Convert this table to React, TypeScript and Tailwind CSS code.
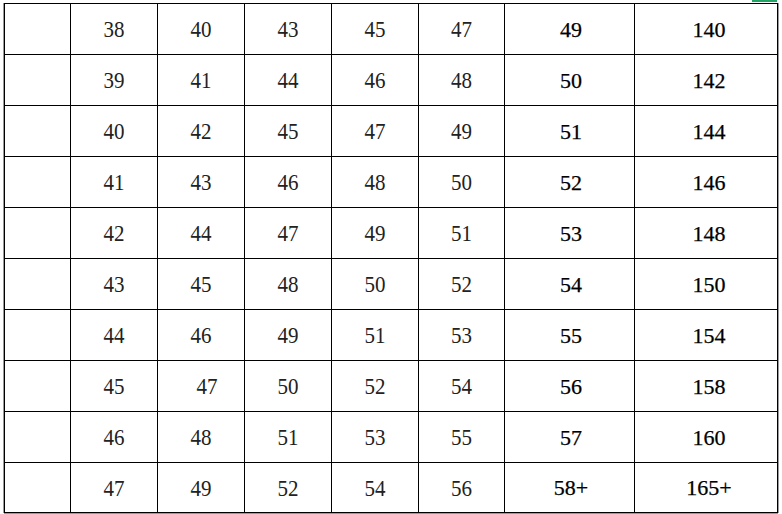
const rows: (string | number)[][] = [
  [38, 40, 43, 45, 47, 49, 140],
  [39, 41, 44, 46, 48, 50, 142],
  [40, 42, 45, 47, 49, 51, 144],
  [41, 43, 46, 48, 50, 52, 146],
  [42, 44, 47, 49, 51, 53, 148],
  [43, 45, 48, 50, 52, 54, 150],
  [44, 46, 49, 51, 53, 55, 154],
  [45, 47, 50, 52, 54, 56, 158],
  [46, 48, 51, 53, 55, 57, 160],
  [47, 49, 52, 54, 56, "58+", "165+"],
]

export default function App() {
  return (
    <div className="relative w-[782px] h-[514px] bg-white overflow-hidden">
      <div className="absolute top-0 left-[752px] w-[25px] h-[2px] bg-[#21a366]" />
      <div className="pl-[4px] pt-[3px]">
        <div className="grid grid-cols-[65px_86px_86px_86px_86px_85px_129px_142px] gap-px bg-black border border-black w-fit shadow-[-1px_0_0_#9a9a9a,1px_0_0_#9a9a9a,0_1px_0_#9a9a9a]">
          {rows.map((row, i) => (
            <div key={i} className="contents">
              <div className={`bg-white ${i === rows.length - 1 ? "h-[49px]" : "h-[50px]"}`} />
              {row.map((v, j) =>
                j < 5 ? (
                  <div
                    key={j}
                    className={`bg-white flex items-center justify-center pt-[2px] font-['Liberation_Serif',serif] text-[21px] text-[#222] ${i === 7 && j === 1 ? "pl-3" : ""}`}
                  >
                    <span className="inline-block scale-y-110">{v}</span>
                  </div>
                ) : (
                  <div
                    key={j}
                    className={`bg-white flex items-center justify-center font-['Liberation_Serif',serif] text-[22px] text-black [-webkit-text-stroke:0.25px_black] ${j === 5 ? "pl-[3px]" : "pl-[6px]"}`}
                  >
                    {v}
                  </div>
                )
              )}
            </div>
          ))}
        </div>
      </div>
    </div>
  )
}
